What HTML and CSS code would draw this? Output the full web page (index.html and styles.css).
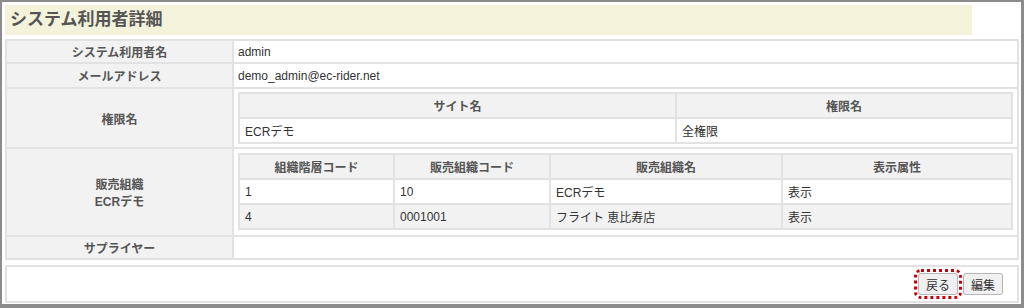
FILE: index.html
```html
<!DOCTYPE html>
<html lang="ja">
<head>
<meta charset="UTF-8">
<title>システム利用者詳細</title>
<link rel="stylesheet" href="styles.css">
</head>
<body>
<div class="frame">
  <h1 class="page-title">システム利用者詳細</h1>
  <table class="detail">
    <tr class="r-name">
      <th>システム利用者名</th>
      <td>admin</td>
    </tr>
    <tr class="r-mail">
      <th>メールアドレス</th>
      <td>demo_admin@ec-rider.net</td>
    </tr>
    <tr>
      <th>権限名</th>
      <td class="nest">
        <table class="sub">
          <colgroup><col style="width:437px"><col></colgroup>
          <tr><th>サイト名</th><th>権限名</th></tr>
          <tr><td>ECRデモ</td><td>全権限</td></tr>
        </table>
      </td>
    </tr>
    <tr>
      <th>販売組織<br>ECRデモ</th>
      <td class="nest nest-org">
        <table class="sub">
          <colgroup><col style="width:155px"><col style="width:156px"><col style="width:232px"><col></colgroup>
          <tr><th>組織階層コード</th><th>販売組織コード</th><th>販売組織名</th><th>表示属性</th></tr>
          <tr><td>1</td><td>10</td><td>ECRデモ</td><td>表示</td></tr>
          <tr class="alt"><td>4</td><td>0001001</td><td>フライト 恵比寿店</td><td>表示</td></tr>
        </table>
      </td>
    </tr>
    <tr class="r-sup">
      <th>サプライヤー</th>
      <td></td>
    </tr>
  </table>
  <div class="actions">
    <button class="btn focus">戻る</button>
    <button class="btn">編集</button>
  </div>
</div>
</body>
</html>
```

FILE: styles.css
```css
:root { --line:#e2e2e2; --label:#f2f2f2; --ink:#333; --muted:#555; }
*{box-sizing:border-box;}
html,body{margin:0;padding:0;background:#fff;}
body{font-family:"Liberation Sans","Noto Sans CJK JP",sans-serif;font-size:12px;color:var(--ink);}
/* outer frame of the capture */
.frame{width:1024px;height:308px;border-style:solid;border-color:#8c8c8c;border-width:2px 3px 4px 2px;padding:3px 2px 0 3px;}
.page-title{margin:0;width:967px;height:30px;background:#f3f3db;color:var(--muted);font-size:17px;font-weight:bold;line-height:30px;padding-left:5px;}
/* detail table */
.detail{margin-top:4px;width:1014px;border-collapse:collapse;border:2px solid var(--line);}
.detail > tbody > tr > th,.detail > tbody > tr > td{border:2px solid var(--line);}
.detail > tbody > tr > th{width:227px;background:var(--label);color:var(--muted);font-weight:bold;text-align:center;padding:0;}
.detail > tbody > tr > td{padding:0 4px;text-align:left;}
.r-name > *{height:23px;}
.r-mail > *{height:25px;}
.r-sup > *{height:23px;}
.detail td.nest{padding:3px 4px;}
.detail td.nest-org{padding:4px 4px 5px;}
/* nested tables */
.sub{width:100%;border-collapse:collapse;border:2px solid var(--line);table-layout:fixed;}
.sub th,.sub td{border:2px solid var(--line);height:25px;padding:0 5px;}
.sub th{background:var(--label);color:var(--muted);font-weight:bold;text-align:center;}
.sub td{text-align:left;}
.sub tr.alt td{background:var(--label);}
/* footer buttons */
.actions{margin-top:5px;width:1014px;height:38px;border:2px solid var(--line);display:flex;justify-content:flex-end;align-items:center;gap:3px;padding-right:14px;}
.btn{font-family:inherit;font-size:12px;color:#333;background:#f0f0f0;border:1px solid #b5b5b5;border-radius:3px;height:22px;padding:0 7px;}
.btn.focus{outline:3px dotted #c8000a;outline-offset:1px;margin-right:2px;}
```
